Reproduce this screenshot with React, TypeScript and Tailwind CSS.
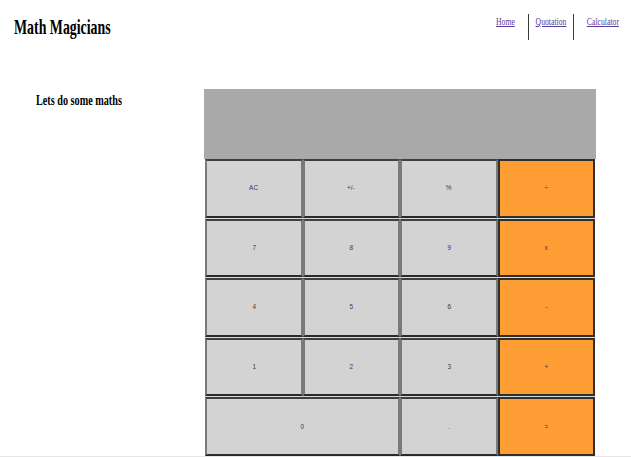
import React from "react";

const keys: { label: string; span?: boolean; op?: boolean }[] = [
  { label: "AC" }, { label: "+/-" }, { label: "%" }, { label: "÷", op: true },
  { label: "7" }, { label: "8" }, { label: "9" }, { label: "x", op: true },
  { label: "4" }, { label: "5" }, { label: "6" }, { label: "-", op: true },
  { label: "1" }, { label: "2" }, { label: "3" }, { label: "+", op: true },
  { label: "0", span: true }, { label: "." }, { label: "=", op: true },
];

export default function App() {
  return (
    <div className="w-[631px] h-[457px] bg-white overflow-hidden flex flex-col" style={{ fontFamily: '"Liberation Serif", serif' }}>
      <header className="flex h-[56px] shrink-0">
        <h1 className="pl-[14px] pt-[15px] text-[21px] font-bold text-black leading-[24px]">
          <span className="inline-block scale-x-[0.66] origin-left whitespace-nowrap">Math Magicians</span>
        </h1>
        <nav className="ml-auto flex pt-[14px] h-[41px]">
          <a href="#" className="w-[46px] h-[26px] flex justify-center text-[11px] leading-[14px] text-[#5b3a9a] underline">
            <span className="inline-block scale-x-[0.7]">Home</span>
          </a>
          <a href="#" className="w-[45px] h-[26px] border-l-[1.5px] border-[#3a3a3a] flex justify-center text-[11px] leading-[14px] text-[#5b3a9a] underline">
            <span className="inline-block scale-x-[0.7]">Quotation</span>
          </a>
          <a href="#" className="w-[58px] h-[26px] border-l-[1.5px] border-[#3a3a3a] flex justify-center text-[11px] leading-[14px] text-[#5b3a9a] underline">
            <span className="inline-block scale-x-[0.7]">Calculator</span>
          </a>
        </nav>
      </header>
      <main className="flex mt-[33px] flex-1">
        <div className="w-[204px] shrink-0 pl-[36px] pt-[2px]">
          <h2 className="text-[15px] font-bold text-black leading-[18px]">
            <span className="inline-block scale-x-[0.68] origin-left whitespace-nowrap">Lets do some maths</span>
          </h2>
        </div>
        <div className="w-[392px] flex flex-col">
          <div className="h-[70px] bg-[#a9a9a9]" />
          <div className="ml-[1px] w-[390px] h-[297px] grid grid-cols-4 grid-rows-5 gap-y-[1px] bg-[#d9d9d9]" style={{ fontFamily: '"Liberation Sans", sans-serif' }}>
            {keys.map((k) => (
              <button
                key={k.label}
                className={
                  "flex items-center justify-center text-[8px] text-[#3a3a3a] border-2 " +
                  (k.span ? "col-span-2 " : "") +
                  (k.op
                    ? "bg-[#fe9d33] border-[#2e2e2e]"
                    : "bg-[#d3d3d3] border-t-[#3f3f3f] border-b-[#2a2a2a] border-l-[#7a7a7a] border-r-[#7a7a7a]")
                }
              >
                <span className="inline-block scale-x-[0.8]">{k.label}</span>
              </button>
            ))}
          </div>
        </div>
      </main>
      <div className="h-[2px] bg-[#e6e6e6] shrink-0" />
    </div>
  );
}
